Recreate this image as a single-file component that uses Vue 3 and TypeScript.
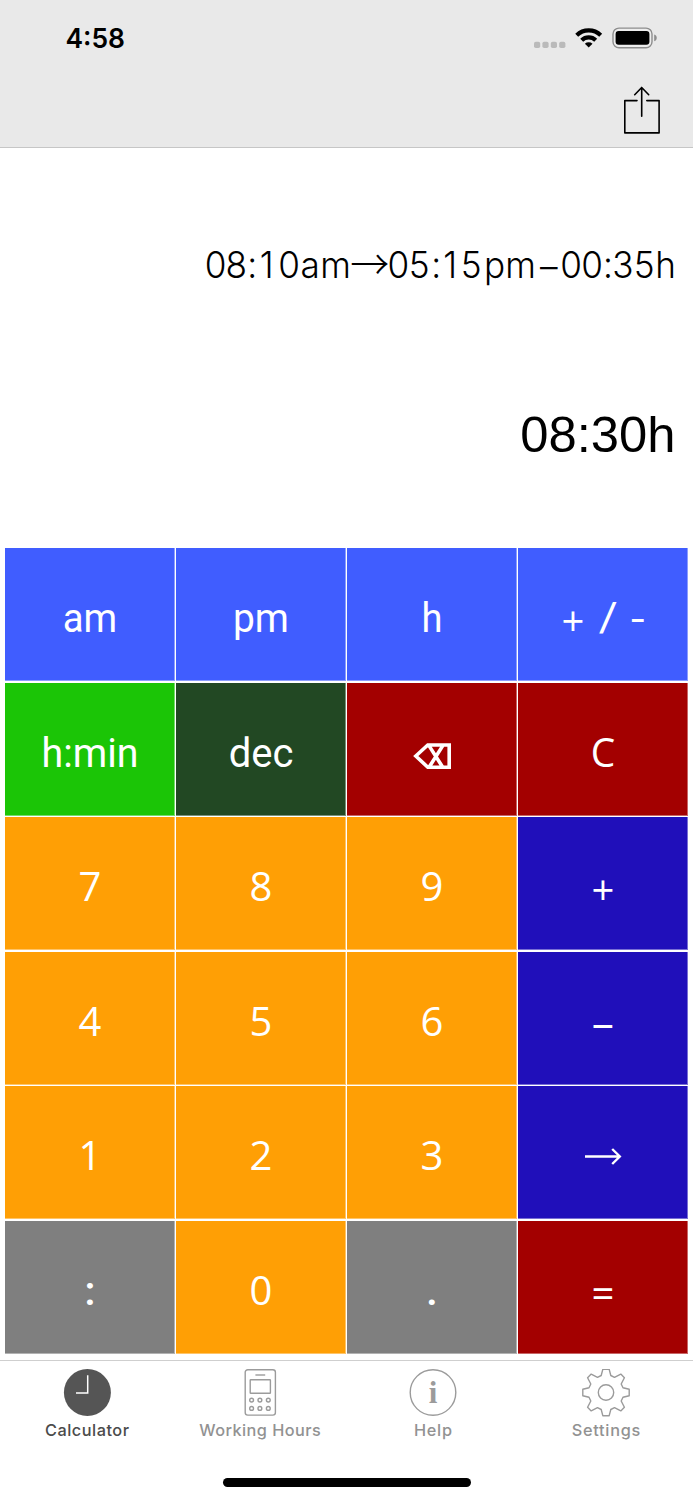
<script setup lang="ts">
interface Run {
  t: string
  x?: number
  dy?: number
  len?: number
  size?: number
  face?: 'num' | 'dot'
}
interface Key {
  id: string
  tone: string
  runs?: Run[]
  icon?: 'erase' | 'arrow'
}

const digit = (t: string): Key => ({ id: t, tone: 'orange', runs: [{ t, face: 'num' }] })

const keys: Key[] = [
  { id: 'am', tone: 'sky', runs: [{ t: 'am', len: 54.5 }] },
  { id: 'pm', tone: 'sky', runs: [{ t: 'pm', len: 56 }] },
  { id: 'h', tone: 'sky', runs: [{ t: 'h', len: 21 }] },
  {
    id: 'sign',
    tone: 'sky',
    runs: [{ t: '+', x: -30, dy: 3.8, face: 'num' }, { t: '/', x: 5.3, len: 19, dy: -0.6 }, { t: '-', x: 34.7, dy: 1, len: 13.5 }],
  },
  { id: 'h:min', tone: 'green', runs: [{ t: 'h:min', len: 97 }] },
  { id: 'dec', tone: 'forest', runs: [{ t: 'dec' }] },
  { id: 'erase', tone: 'red', icon: 'erase' },
  { id: 'C', tone: 'red', runs: [{ t: 'C', face: 'num', len: 24.5 }] },
  digit('7'),
  digit('8'),
  digit('9'),
  { id: '+', tone: 'navy', runs: [{ t: '+', dy: 3.8, face: 'num' }] },
  digit('4'),
  digit('5'),
  digit('6'),
  { id: '-', tone: 'navy', runs: [{ t: '–', dy: 5.4, len: 25 }] },
  digit('1'),
  digit('2'),
  digit('3'),
  { id: 'to', tone: 'navy', icon: 'arrow' },
  { id: ':', tone: 'gray', runs: [{ t: ':', face: 'dot' }] },
  digit('0'),
  { id: '.', tone: 'gray', runs: [{ t: '.', face: 'dot' }] },
  { id: '=', tone: 'red', runs: [{ t: '=', dy: 3.4, face: 'num' }] },
]

// Glyph centres of the expression line, in screen pixels.
const squeeze = 0.95
const centres = [
  215.7, 236.2, 252.3, 266.7, 289, 310.2, 335.5, 369.7,
  398.3, 419.2, 436.3, 450.3, 471.3, 494.5, 520.7, 548.7,
  571, 592, 608, 623, 644.3, 665.7,
]
const exprX = centres.map((x) => (x / squeeze).toFixed(2)).join(' ')

const tabs = [
  { name: 'Calculator', icon: 'clock', len: 84, active: true },
  { name: 'Working Hours', icon: 'device', len: 121.5, active: false },
  { name: 'Help', icon: 'info', len: 38, active: false },
  { name: 'Settings', icon: 'gear', len: 68.5, active: false },
]

const dots = [252, 260.3, 268.7].flatMap((x) => [31, 39.3].map((y) => ({ x: x - 236.5, y })))

const gearPath = (() => {
  const quarter = [
    [-3.2, -23.2], [3.2, -23.2], [4.8, -17], [8.5, -15.2],
    [14.8, -18.4], [18.4, -14.8], [15.2, -8.5], [17, -4.8],
  ]
  const points: string[] = []
  for (let i = 0; i < 4; i++) {
    for (const [px, py] of quarter) {
      let x = px
      let y = py
      for (let k = 0; k < i; k++) [x, y] = [-y, x]
      points.push(`${x + 24},${y + 24}`)
    }
  }
  return `M${points.join('L')}Z`
})()
</script>

<template>
  <div class="screen">
    <header class="header">
      <div class="status">
        <svg class="time" width="90" height="36" viewBox="0 0 90 36">
          <text x="10.5" y="27.5" textLength="59.5" lengthAdjust="spacingAndGlyphs">4:58</text>
        </svg>
        <svg width="126" height="30" viewBox="532 20 126 30">
          <g fill="#bababa">
            <rect x="534" y="41.8" width="6.2" height="6.2" rx="1.8" />
            <rect x="542.4" y="41.8" width="6.2" height="6.2" rx="1.8" />
            <rect x="550.8" y="41.8" width="6.2" height="6.2" rx="1.8" />
            <rect x="559.2" y="41.8" width="6.2" height="6.2" rx="1.8" />
          </g>
          <g fill="none" stroke="#000" stroke-width="4.2">
            <path d="M576.7 35.2a17.2 17.2 0 0 1 24 0" />
            <path d="M581.7 40.3a10 10 0 0 1 14 0" />
          </g>
          <path d="M584.9 43.7a5.6 5.6 0 0 1 7.6 0l-3.8 3.9z" />
          <rect x="613" y="28.1" width="39" height="19.6" rx="6" fill="#ededed" stroke="#8d8d8d" stroke-width="1.4" />
          <rect x="615.6" y="31" width="33.8" height="13.8" rx="3" />
          <path d="M654.2 34.4c3.4 1.1 3.4 5.7 0 6.8z" fill="#8d8d8d" />
        </svg>
      </div>
      <button class="share" aria-label="Share">
        <svg width="38" height="50" viewBox="623 85 38 50" fill="none" stroke="#000" stroke-width="1.6" stroke-linecap="round" stroke-linejoin="round">
          <path d="M637 100.6h-12.2v32.3h34.3v-32.3h-12.3M641.7 116.3v-28.7M634.7 94.7l7-7.2 7 7.2" />
        </svg>
      </button>
    </header>

    <section class="display">
      <svg width="693" height="399" viewBox="0 149 693 399">
        <text class="expr" :x="exprX" y="277.6" :transform="`scale(${squeeze} 1)`">08:10am<tspan class="long" dy="2.2">→</tspan><tspan dy="-2.2">05:15pm</tspan><tspan dy="2">–</tspan><tspan dy="-2">00:35h</tspan></text>
        <text class="result" x="520.3" y="452.2" textLength="155.2" lengthAdjust="spacingAndGlyphs">08:30h</text>
      </svg>
    </section>

    <main class="keypad">
      <button v-for="k in keys" :key="k.id" class="key" :class="k.tone">
        <svg width="170" height="133" viewBox="-85 0 170 133">
          <text
            v-for="r in k.runs ?? []"
            :key="r.t"
            :class="r.face"
            :x="r.x ?? 0"
            :y="84 + (r.dy ?? 0)"
            :font-size="r.size ?? 40"
            :textLength="r.len"
            lengthAdjust="spacingAndGlyphs"
          >{{ r.t }}</text>
          <path
            v-if="k.icon === 'erase'"
            d="M-16.2 73l12-11h21.4v22.2h-21.4zM-3.2 62.4l13.8 21.6M11 62.4l-13.8 21.6"
            fill="none"
            stroke="#fff"
            stroke-width="3.6"
          />
          <path
            v-if="k.icon === 'arrow'"
            d="M-18 70.5h34.5M9.2 63l7.6 7.5-7.6 7.5"
            fill="none"
            stroke="#fff"
            stroke-width="2.4"
          />
        </svg>
      </button>
    </main>

    <nav class="tabs">
      <a v-for="t in tabs" :key="t.name" class="tab" :class="{ active: t.active }">
        <svg v-if="t.icon === 'clock'" class="icon" width="48" height="48" viewBox="0 0.5 48 48">
          <circle cx="24.4" cy="24" r="23.5" fill="#555" />
          <path d="M24.7 6.8v17.7H13" fill="none" stroke="#fff" stroke-width="1.5" />
        </svg>
        <svg v-else-if="t.icon === 'device'" class="icon" width="48" height="48" viewBox="0 0.5 48 48" fill="none" stroke="#9b9b9b" stroke-width="1.4">
          <rect x="9.2" y="1.2" width="30.2" height="45.4" rx="2.6" />
          <path d="M19.4 6.5h9.8" />
          <rect x="14.2" y="11.2" width="20.2" height="13.6" rx="0.6" />
          <circle v-for="d in dots" :key="`${d.x}-${d.y}`" :cx="d.x + 0.1" :cy="d.y + 0.6" r="1.9" />
        </svg>
        <svg v-else-if="t.icon === 'info'" class="icon" width="48" height="48" viewBox="0 0.5 48 48">
          <circle cx="24" cy="24" r="22.8" fill="none" stroke="#9b9b9b" stroke-width="1.4" />
          <text class="info" x="24" y="34.8">i</text>
        </svg>
        <svg v-else class="icon" width="48" height="48" viewBox="0 0.5 48 48" fill="none" stroke="#9b9b9b" stroke-width="1.4" stroke-linejoin="round">
          <path :d="gearPath" />
          <circle cx="24" cy="24" r="7.7" />
        </svg>
        <svg class="label" width="150" height="24" viewBox="-75 0 150 24">
          <text x="0" y="19.2" :textLength="t.len">{{ t.name }}</text>
        </svg>
      </a>
    </nav>
    <div class="home"><span class="bar"></span></div>
  </div>
</template>

<style>
body {
  background: #fff;
}
</style>

<style scoped>
.screen {
  width: 693px;
  height: 1500px;
  display: flex;
  flex-direction: column;
  background: #fff;
  overflow: hidden;
}
svg {
  display: block;
  flex: none;
}
button {
  border: 0;
  padding: 0;
  background: none;
}
.header {
  height: 147px;
  flex: none;
  background: #e9e9e9;
  border-bottom: 1px solid #c6c6c6;
}
.status {
  display: flex;
  justify-content: space-between;
  padding: 20px 35px 0 55px;
}
.time text {
  font: 600 27px Inter, sans-serif;
}
.share {
  display: block;
  margin: 29px 32px 0 auto;
}
.display {
  height: 399px;
  margin-top: 1px;
  flex: none;
}
.expr {
  font: 300 37px Inter, sans-serif;
  font-feature-settings: "calt" 0;
  text-anchor: middle;
}
.long {
  font-family: "Noto Sans CJK JP", sans-serif;
  font-size: 41px;
}
.result {
  font: 50px "Liberation Sans", sans-serif;
}
.keypad {
  flex: none;
  height: 806px;
  margin: 0 5px;
  padding-top: 0.4px;
  box-sizing: border-box;
  display: grid;
  grid-template-columns: repeat(4, 1fr);
  grid-template-rows: repeat(6, 1fr);
  gap: 1.5px;
}
.key {
  display: flex;
  justify-content: center;
  overflow: hidden;
  min-width: 0;
  min-height: 0;
  box-shadow: inset -1px -1px rgba(255, 255, 255, 0.4);
}
.key text {
  font-family: Roboto, sans-serif;
  fill: #fff;
  text-anchor: middle;
}
.key .num {
  font-family: "Open Sans", "Noto Sans", sans-serif;
}
.key .dot {
  font-weight: 600;
}
.sky { background: #405dff; }
.green { background: #1bc506; }
.forest { background: #224823; }
.red { background: #a30000; }
.orange { background: #ff9f05; }
.navy { background: #200fba; }
.gray { background: #7f7f7f; }
.tabs {
  flex: none;
  height: 118px;
  margin-top: 6px;
  box-sizing: border-box;
  border-top: 1px solid #cfcfcf;
  display: grid;
  grid-template-columns: repeat(4, 1fr);
}
.tab {
  display: flex;
  flex-direction: column;
  align-items: center;
  padding-top: 8px;
  color: #929292;
}
.tab.active {
  color: #4b4b4b;
}
.label text {
  font: 450 16.3px Inter, sans-serif;
  fill: currentColor;
  text-anchor: middle;
}
.info {
  font: bold 31px "Liberation Serif", serif;
  fill: #9b9b9b;
  text-anchor: middle;
}
.home {
  display: flex;
  justify-content: center;
}
.bar {
  width: 248px;
  height: 8.5px;
  border-radius: 5px;
  background: #000;
}
</style>
